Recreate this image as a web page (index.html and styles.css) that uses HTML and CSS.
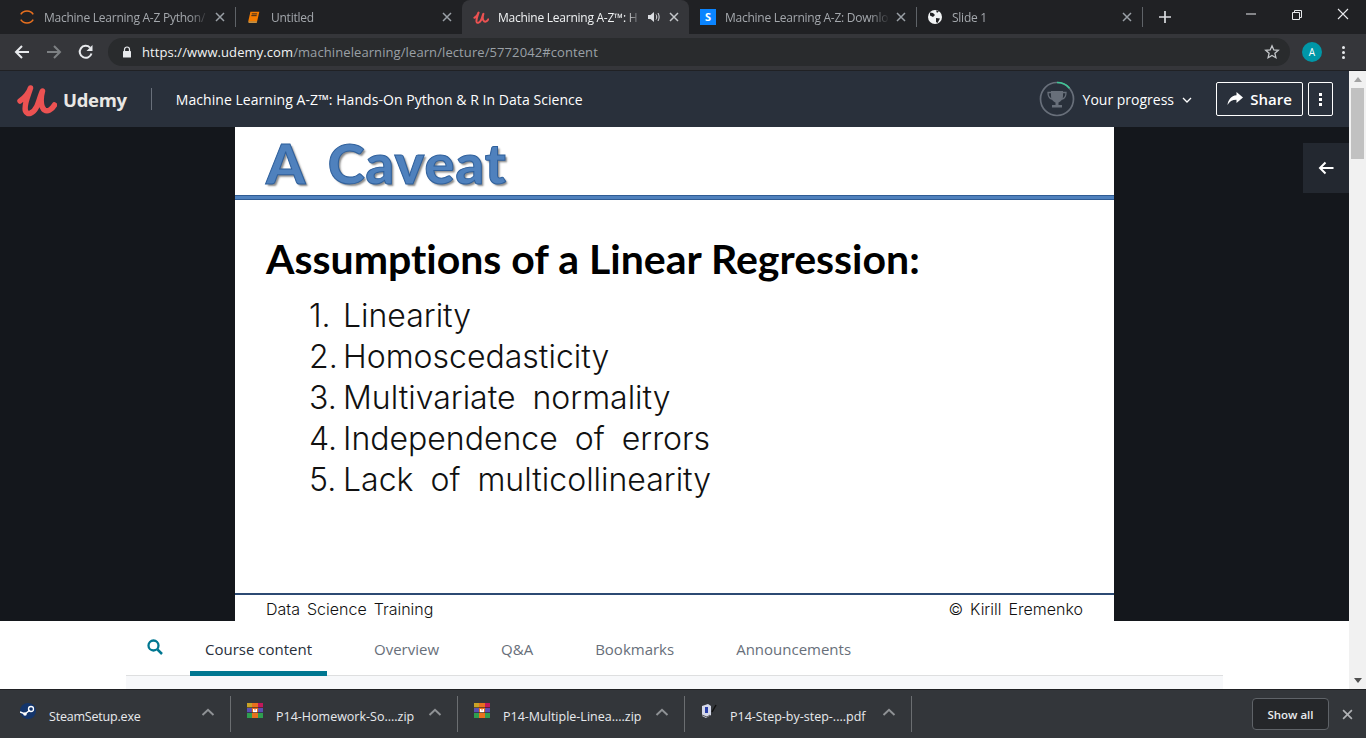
FILE: index.html
```html
<!DOCTYPE html>
<html lang="en">

<head>
    <meta charset="UTF-8">
    <title>Machine Learning A-Z: Hands-On Python &amp; R In Data Science</title>
    <link rel="stylesheet" href="styles.css">
</head>

<body>
    <svg class="defs" width="0" height="0">
        <symbol id="x" viewBox="0 0 10 10">
            <path d="M1 1l8 8M9 1l-8 8" fill="none" stroke="currentColor" stroke-width="1.5" />
        </symbol>
        <symbol id="chev" viewBox="0 0 14 8">
            <path d="M1.5 7L7 1.8 12.5 7" fill="none" stroke="currentColor" stroke-width="2" />
        </symbol>
        <symbol id="rar" viewBox="0 0 16 16">
            <rect x="0" y="0" width="5" height="5" fill="#c9a227" />
            <rect x="11" y="0" width="5" height="5" fill="#c2185b" />
            <rect x="0" y="5" width="16" height="5" fill="#5c4fb0" />
            <rect x="0" y="10" width="16" height="5" fill="#2e9e4f" />
            <rect x="5" y="0" width="6" height="15" fill="#e8701f" />
            <path d="M6 9.500V6h1.500v1.500H8.500V6H10v3.500z" fill="#fff" />
            <path d="M0 4.500h16M0 9.500h16" stroke="#222" stroke-width=".6" />
        </symbol>
    </svg>

    <div class="tabstrip">
        <div class="tab">
            <svg class="favicon" viewBox="0 0 18 18">
                <path d="M2 6c3-5 11-5 14 0M2 12c3 5 11 5 14 0" fill="none" stroke="#e8701f" stroke-width="1.700" />
            </svg>
            <span class="tab-title">Machine Learning A-Z Python/</span>
            <svg class="tab-x"><use href="#x" /></svg>
        </div>
        <div class="tab tab-sep">
            <svg class="favicon" viewBox="0 0 18 18">
                <path d="M5 3h10l-2.500 11H2.500z" fill="#f57c00" />
                <path d="M6.500 5.500h6M6 7.500h6" stroke="#202124" stroke-width="1" />
                <path d="M2.500 14h10l-.4 1.500H3z" fill="#ffb74d" />
            </svg>
            <span class="tab-title">Untitled</span>
            <svg class="tab-x"><use href="#x" /></svg>
        </div>
        <div class="tab tab-active">
            <svg class="favicon" viewBox="0 0 40 36">
                <path d="M3.500 20C8 17 13 11 14 7C12 14 7 24 9 30C11 35 17 32 20 26C22 22 24 14 26 10C24 17 24 26 28 29C31 31 35 29 38 24" fill="none" stroke="#ec5252" stroke-width="5" stroke-linecap="round" stroke-linejoin="round" />
            </svg>
            <span class="tab-title">Machine Learning A-Z™: H</span>
            <svg class="tab-audio" viewBox="0 0 12 12">
                <path d="M0 4h2.500L6 1v10L2.500 8H0z" fill="#dadce0" />
                <path d="M8 3.500c1 1.500 1 3.500 0 5M10 2c1.500 2.500 1.500 5.500 0 8" fill="none" stroke="#dadce0" />
            </svg>
            <svg class="tab-x"><use href="#x" /></svg>
        </div>
        <div class="tab">
            <span class="favicon favicon-s">S</span>
            <span class="tab-title">Machine Learning A-Z: Downlo</span>
            <svg class="tab-x"><use href="#x" /></svg>
        </div>
        <div class="tab tab-sep tab-sep-end">
            <svg class="favicon" viewBox="0 0 16 16">
                <circle cx="8" cy="8" r="7" fill="#f1f3f4" />
                <path d="M3 3.500l3 .5 2 2-2 2-3-1.500zM9 9l4 .5-2.500 4.500-1.500-1zM9 1.500l3 .5-2 2z" fill="#202124" />
            </svg>
            <span class="tab-title">Slide 1</span>
            <svg class="tab-x"><use href="#x" /></svg>
        </div>
        <svg class="new-tab" viewBox="0 0 12 12">
            <path d="M6 0v12M0 6h12" stroke="#dadce0" stroke-width="1.700" />
        </svg>
        <div class="win-btns">
            <svg viewBox="0 0 46 28"><path d="M18 14h10" stroke="#e8eaed" /></svg>
            <svg viewBox="0 0 46 28"><path d="M18.500 12.500h7v7h-7zM20.500 12.500v-2h7v7h-2" fill="none" stroke="#e8eaed" /></svg>
            <svg viewBox="0 0 46 28"><path d="M18 9l10 10M28 9L18 19" stroke="#e8eaed" stroke-width="1.100" /></svg>
        </div>
    </div>

    <div class="toolbar">
        <svg class="nav-icon" viewBox="0 0 16 16">
            <path d="M15 8H2M8 2L2 8l6 6" fill="none" stroke="#e8eaed" stroke-width="2" />
        </svg>
        <svg class="nav-icon" viewBox="0 0 16 16">
            <path d="M1 8h13M8 2l6 6-6 6" fill="none" stroke="#7d8083" stroke-width="2" />
        </svg>
        <svg class="nav-icon" viewBox="0 0 16 16">
            <path d="M13.500 9.500A6 6 0 1 1 12 3.600" fill="none" stroke="#e8eaed" stroke-width="2" />
            <path d="M14.500 1v6h-6z" fill="#e8eaed" />
        </svg>
        <div class="omnibox">
            <svg class="lock" viewBox="0 0 10 12">
                <path d="M2.500 5V3.500a2.500 2.500 0 0 1 5 0V5" fill="none" stroke="#e8eaed" stroke-width="1.200" />
                <rect x="1" y="5" width="8" height="6.500" rx=".6" fill="#e8eaed" />
            </svg>
            <span class="url"><b>https://www.udemy.com</b>/machinelearning/learn/lecture/5772042#content</span>
            <svg class="star" viewBox="0 0 16 16">
                <path d="M8 1.800l1.800 4.100 4.500.4-3.400 3 1 4.400L8 11.400l-3.900 2.300 1-4.400-3.400-3 4.500-.4z" fill="none" stroke="#c4c7ca" stroke-width="1.300" />
            </svg>
        </div>
        <span class="avatar">A</span>
        <div class="kebab">
            <i></i><i></i><i></i>
        </div>
    </div>

    <div class="page">
        <div class="content">
            <header class="site-header">
                <svg class="logo" viewBox="0 0 40 36">
                    <path d="M3.500 20C8 17 13 11 14 7C12 14 7 24 9 30C11 35 17 32 20 26C22 22 24 14 26 10C24 17 24 26 28 29C31 31 35 29 38 24" fill="none" stroke="#ec5252" stroke-width="5.500" stroke-linecap="round" stroke-linejoin="round" />
                </svg>
                <span class="brand">Udemy</span>
                <span class="header-sep"></span>
                <span class="course-title">Machine Learning A-Z™: Hands-On Python &amp; R In Data Science</span>
                <div class="progress">
                    <svg class="trophy" viewBox="0 0 36 36">
                        <circle cx="18" cy="18" r="16.500" fill="none" stroke="#686f7a" stroke-width="1.700" />
                        <path d="M18 1.500a16.500 16.500 0 0 1 12.500 5.700" fill="none" stroke="#3dc795" stroke-width="1.700" />
                        <path d="M12 10h12v5c0 4-3 6-4.500 6.500V24H23v2.500H13V24h3.500v-2.500C15 21 12 19 12 15z" fill="#686f7a" />
                        <path d="M12 11.500H9c0 4 1 6 4 6.500M24 11.500h3c0 4-1 6-4 6.500" fill="none" stroke="#686f7a" stroke-width="1.300" />
                    </svg>
                    <span>Your progress</span>
                    <svg class="progress-chev" viewBox="0 0 10 6">
                        <path d="M1 1l4 4 4-4" fill="none" stroke="#fff" stroke-width="1.300" />
                    </svg>
                </div>
                <button class="hdr-btn share-btn">
                    <svg viewBox="0 0 16 14">
                        <path d="M9.500 0L16 5.500 9.500 11V7.800C5 7.800 2.500 9.500 .5 13 1 8 4 3.700 9.500 3.200z" fill="#fff" />
                    </svg>
                    Share
                </button>
                <button class="hdr-btn more-btn">
                    <i></i><i></i><i></i>
                </button>
            </header>

            <section class="player">
                <div class="slide">
                    <h1 class="slide-head">A Caveat</h1>
                    <div class="slide-rule"></div>
                    <h2 class="slide-title">Assumptions of a Linear Regression:</h2>
                    <ol class="slide-list">
                        <li><span>1.</span>Linearity</li>
                        <li><span>2.</span>Homoscedasticity</li>
                        <li><span>3.</span>Multivariate normality</li>
                        <li><span>4.</span>Independence of errors</li>
                        <li><span>5.</span>Lack of multicollinearity</li>
                    </ol>
                    <div class="slide-foot">
                        <span>Data Science Training</span>
                        <span>© Kirill Eremenko</span>
                    </div>
                </div>
                <div class="side-btn">
                    <svg viewBox="0 0 16 14">
                        <path d="M15.500 7H2M7.500 1.500L2 7l5.500 5.500" fill="none" stroke="#fff" stroke-width="2" />
                    </svg>
                </div>
            </section>

            <nav class="course-nav">
                <div class="course-tabs">
                    <svg class="search" viewBox="0 0 16 16">
                        <circle cx="6.500" cy="6.500" r="5" fill="none" stroke="#007791" stroke-width="2.300" />
                        <path d="M10.500 10.500L15 15" stroke="#007791" stroke-width="2.500" />
                    </svg>
                    <a class="course-tab current">Course content</a>
                    <a class="course-tab">Overview</a>
                    <a class="course-tab">Q&amp;A</a>
                    <a class="course-tab">Bookmarks</a>
                    <a class="course-tab">Announcements</a>
                </div>
                <div class="course-body"></div>
            </nav>
        </div>

        <div class="scrollbar">
            <span class="arrow-up"></span>
            <span class="thumb"></span>
            <span class="arrow-down"></span>
        </div>
    </div>

    <div class="downloads">
        <div class="dl-item">
            <svg class="dl-icon" viewBox="0 0 16 16">
                <circle cx="8" cy="8" r="8" fill="#14356b" />
                <path d="M0 9l5 2 5-4" stroke="#fff" stroke-width="1.500" fill="none" />
                <circle cx="11" cy="6" r="2.500" fill="none" stroke="#fff" stroke-width="1.300" />
                <circle cx="5" cy="11" r="1.800" fill="#fff" />
            </svg>
            <span class="dl-name">SteamSetup.exe</span>
            <svg class="dl-chev"><use href="#chev" /></svg>
        </div>
        <div class="dl-item">
            <svg class="dl-icon"><use href="#rar" /></svg>
            <span class="dl-name">P14-Homework-So....zip</span>
            <svg class="dl-chev"><use href="#chev" /></svg>
        </div>
        <div class="dl-item">
            <svg class="dl-icon"><use href="#rar" /></svg>
            <span class="dl-name">P14-Multiple-Linea....zip</span>
            <svg class="dl-chev"><use href="#chev" /></svg>
        </div>
        <div class="dl-item">
            <svg class="dl-icon" viewBox="0 0 16 16">
                <path d="M1 3l6-2 3 2v9l-5 3-4-2z" fill="#d5d8e8" />
                <path d="M4 4h3v6H4z" fill="#2a3fa8" />
                <path d="M1 12l5 2 3-2" stroke="#555" fill="none" />
                <path d="M11 9l4-7" stroke="#111" stroke-width="1.500" />
            </svg>
            <span class="dl-name">P14-Step-by-step-....pdf</span>
            <svg class="dl-chev"><use href="#chev" /></svg>
        </div>
        <button class="show-all">Show all</button>
        <svg class="dl-close"><use href="#x" /></svg>
    </div>
</body>

</html>
```

FILE: styles.css
```css
* {
    box-sizing: border-box;
}

html,
body {
    height: 100%;
}

body {
    margin: 0;
    overflow: hidden;
    display: flex;
    flex-direction: column;
    font-family: "Open Sans", "Noto Sans", sans-serif;
    background-color: #fff;
}

.defs {
    position: absolute;
}

/* browser tabs */
.tabstrip {
    height: 34px;
    flex: none;
    display: flex;
    align-items: stretch;
    padding-left: 8px;
    background-color: #202124;
}

.tab {
    width: 227px;
    display: flex;
    align-items: center;
    padding: 0 10px 0 11px;
    position: relative;
    font-size: 12px;
    letter-spacing: -0.25px;
    color: #a4a8ad;
}

.tab-sep::before {
    content: "";
    position: absolute;
    left: 0;
    top: 7px;
    height: 20px;
    width: 1px;
    background-color: #5f6368;
}

.tab-sep-end::after {
    content: "";
    position: absolute;
    right: 0;
    top: 7px;
    height: 20px;
    width: 1px;
    background-color: #5f6368;
}

.tab-sep-end {
    padding-right: 11px;
}

.tab-active {
    background-color: #35363a;
    border-radius: 8px 8px 0 0;
    color: #f1f3f4;
    height: 34px;
}

.favicon {
    width: 16px;
    height: 16px;
    flex: none;
    margin-right: 9px;
}

.favicon-s {
    background-color: #0a84ff;
    color: #fff;
    font-size: 11px;
    font-weight: 700;
    line-height: 16px;
    text-align: center;
}

.tab-title {
    flex: 1;
    overflow: hidden;
    white-space: nowrap;
    -webkit-mask-image: linear-gradient(to right, #000 88%, transparent 100%);
    mask-image: linear-gradient(to right, #000 88%, transparent 100%);
}

.tab-audio {
    width: 12px;
    height: 12px;
    flex: none;
    margin: 0 3px 0 6px;
}

.tab-x {
    width: 10px;
    height: 10px;
    flex: none;
    margin-left: 6px;
    color: #9aa0a6;
}

.tab-active .tab-x {
    color: #c4c7ca;
}

.new-tab {
    width: 12px;
    height: 12px;
    align-self: center;
    margin-left: 16px;
}

.win-btns {
    margin-left: auto;
    display: flex;
    align-items: flex-start;
}

.win-btns svg {
    width: 46px;
    height: 28px;
}

/* address bar */
.toolbar {
    height: 37px;
    flex: none;
    display: flex;
    align-items: center;
    padding: 0 14px;
    background-color: #35363a;
    border-bottom: 1px solid #202124;
}

.nav-icon {
    width: 16px;
    height: 16px;
    flex: none;
    margin-right: 16px;
}

.omnibox {
    width: 1182px;
    height: 28px;
    margin-left: -2px;
    display: flex;
    align-items: center;
    padding: 0 10px 0 14px;
    border-radius: 14px;
    background-color: #292b2d;
}

.lock {
    width: 10px;
    height: 12px;
    margin-right: 10px;
}

.url {
    font-size: 13px;
    letter-spacing: 0.09px;
    color: #9aa0a6;
}

.url b {
    font-weight: 400;
    color: #f1f3f4;
}

.star {
    width: 16px;
    height: 16px;
    margin-left: auto;
}

.avatar {
    width: 20px;
    height: 20px;
    margin-left: 12px;
    border-radius: 50%;
    background-color: #0097a7;
    color: #fff;
    font-size: 10px;
    line-height: 20px;
    text-align: center;
}

.kebab {
    margin-left: 20px;
    display: flex;
    flex-direction: column;
    gap: 2px;
}

.kebab i {
    width: 3px;
    height: 3px;
    border-radius: 50%;
    background-color: #e8eaed;
}

/* page */
.page {
    flex: 1;
    min-height: 0;
    display: flex;
}

.content {
    width: 1349px;
    display: flex;
    flex-direction: column;
}

.site-header {
    height: 56px;
    flex: none;
    display: flex;
    align-items: center;
    padding: 0 16px;
    background-color: #29303b;
    color: #fff;
}

.logo {
    width: 41px;
    height: 36px;
    flex: none;
}

.brand {
    margin-left: 6px;
    font-size: 18.500px;
    font-weight: 700;
    letter-spacing: -0.3px;
    color: #e9e7e4;
}

.header-sep {
    width: 1px;
    height: 22px;
    margin: 0 24px;
    background-color: #686f7a;
}

.course-title {
    font-size: 14px;
    letter-spacing: 0.05px;
}

.progress {
    margin-left: auto;
    display: flex;
    align-items: center;
    font-size: 14px;
}

.trophy {
    width: 36px;
    height: 36px;
    margin-right: 8px;
}

.progress-chev {
    width: 10px;
    height: 6px;
    margin: 2px 0 0 8px;
}

.hdr-btn {
    height: 34px;
    border: 1px solid #fff;
    border-radius: 2px;
    background-color: transparent;
    color: #fff;
    font-family: inherit;
    display: flex;
    align-items: center;
    justify-content: center;
}

.share-btn {
    width: 87px;
    margin-left: 24px;
    gap: 7px;
    font-size: 15px;
    font-weight: 600;
    padding: 0;
}

.share-btn svg {
    width: 16px;
    height: 14px;
}

.more-btn {
    width: 25px;
    margin-left: 5px;
    flex-direction: column;
    gap: 2px;
    padding: 0;
}

.more-btn i {
    width: 3px;
    height: 3px;
    background-color: #fff;
}

/* slide area */
.player {
    height: 494px;
    flex: none;
    position: relative;
    display: flex;
    justify-content: center;
    background-color: #14171c;
}

.slide {
    width: 879px;
    display: flex;
    flex-direction: column;
    background-color: #fff;
}

.slide-head {
    height: 68px;
    margin: 0;
    padding: 3px 0 0 31px;
    font-family: "Lato", sans-serif;
    font-size: 56px;
    line-height: 65px;
    font-weight: 900;
    word-spacing: 9px;
    letter-spacing: 1px;
    font-variant-ligatures: none;
    color: #4f81bd;
    -webkit-text-stroke: 1px #2f609c;
    text-shadow: 2px 2px 2px #8a8a8a;
}

.slide-rule {
    height: 5px;
    flex: none;
    background-color: #4f81bd;
    border-top: 1px solid #2f5c94;
    border-bottom: 1px solid #2f5c94;
}

.slide-title {
    margin: 34px 0 0 31px;
    font-family: "Lato", sans-serif;
    font-size: 41px;
    line-height: 50px;
    font-weight: 700;
    font-variant-ligatures: none;
    color: #000;
}

.slide-list {
    margin: 11px 0 0 74px;
    padding: 0;
    list-style: none;
    font-family: "Inter", sans-serif;
    font-size: 32px;
    line-height: 41px;
    font-weight: 300;
    word-spacing: 8px;
    color: #111;
}

.slide-list li {
    display: flex;
}

.slide-list li span {
    width: 34px;
    flex: none;
}

.slide-foot {
    margin-top: auto;
    height: 28px;
    flex: none;
    display: flex;
    justify-content: space-between;
    align-items: center;
    padding: 1px 31px 0;
    border-top: 2px solid #2c4a73;
    font-family: "Inter", sans-serif;
    font-size: 16px;
    font-weight: 300;
    word-spacing: 2.500px;
    color: #111;
}

.side-btn {
    position: absolute;
    top: 16px;
    right: 0;
    width: 46px;
    height: 50px;
    display: flex;
    align-items: center;
    justify-content: center;
    background-color: #232830;
}

.side-btn svg {
    width: 16px;
    height: 14px;
}

/* course tabs */
.course-nav {
    flex: 1;
    display: flex;
    flex-direction: column;
    width: 1097px;
    margin: 0 auto;
}

.course-tabs {
    height: 55px;
    flex: none;
    display: flex;
    align-items: stretch;
    gap: 32px;
    padding-left: 21px;
    border-bottom: 1px solid #dedfe0;
}

.search {
    width: 16px;
    height: 16px;
    align-self: center;
    margin: -2px -5px 0 0;
}

.course-tab {
    display: flex;
    align-items: center;
    padding: 5px 15px 0;
    margin-bottom: -1px;
    font-size: 15px;
    color: #686f7a;
    border-bottom: 5px solid transparent;
}

.course-tab.current {
    color: #29303b;
    border-bottom-color: #007791;
}

.course-body {
    flex: 1;
    background-color: #f7f8fa;
}

.scrollbar {
    width: 17px;
    flex: none;
    display: flex;
    flex-direction: column;
    align-items: center;
    padding: 6px 2px;
    background-color: #f1f1f1;
}

.arrow-up {
    border: 4px solid transparent;
    border-top-width: 0;
    border-bottom: 5px solid #a3a3a3;
}

.thumb {
    width: 13px;
    height: 71px;
    margin-top: 6px;
    background-color: #c1c1c1;
}

.arrow-down {
    margin-top: auto;
    border: 4px solid transparent;
    border-bottom-width: 0;
    border-top: 5px solid #505050;
}

/* download shelf */
.downloads {
    height: 49px;
    flex: none;
    display: flex;
    align-items: center;
    background-color: #33363a;
    border-top: 1px solid #202124;
}

.dl-item {
    width: 227px;
    height: 36px;
    display: flex;
    align-items: center;
    padding: 0 15px 0 16px;
    border-right: 1px solid #6b6e71;
    font-size: 12.500px;
    color: #e8eaed;
}

.dl-item:first-child {
    width: 231px;
    padding-left: 20px;
    letter-spacing: -0.2px;
}

.dl-icon {
    width: 16px;
    height: 16px;
    flex: none;
    margin: -6px 13px 0 0;
}

.dl-name {
    flex: 1;
    white-space: nowrap;
    padding-top: 5px;
}

.dl-chev {
    width: 14px;
    height: 8px;
    flex: none;
    margin-top: -4px;
    color: #8f9295;
}

.show-all {
    width: 77px;
    height: 32px;
    margin-left: auto;
    border: 1px solid #5f6368;
    border-radius: 4px;
    background-color: #25272a;
    color: #e8eaed;
    font-family: inherit;
    font-size: 11.500px;
    font-weight: 600;
    padding: 0;
}

.dl-close {
    width: 11px;
    height: 11px;
    margin: 0 13px 0 13px;
    color: #b0b2b5;
}
```
